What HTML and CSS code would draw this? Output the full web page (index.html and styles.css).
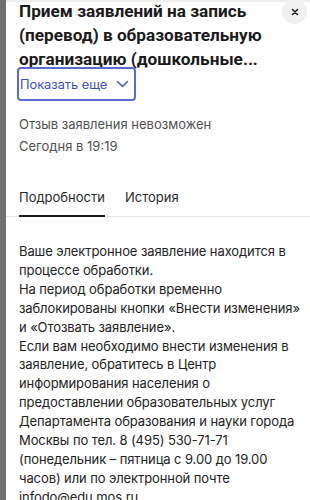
FILE: index.html
```html
<!DOCTYPE html>
<html lang="ru">
    <head>
        <meta charset="UTF-8" />
        <meta name="viewport" content="width=device-width, initial-scale=1.0" />
        <title>Заявление</title>
        <link rel="stylesheet" href="styles.css">
    </head>
    <body>
        <div class="page">
            <div class="side_strip"></div>
            <div class="panel">
                <div class="panel_head">
                    <h1>Прием заявлений на запись (перевод) в образовательную организацию (дошкольные...</h1>
                    <button class="close_btn" aria-label="Закрыть">
                        <svg width="10" height="10" viewBox="0 0 10 10">
                            <path d="M2.5 2.5 L7.5 7.5 M7.5 2.5 L2.5 7.5" stroke="#1f1f1f" stroke-width="1.6" stroke-linecap="round" />
                        </svg>
                    </button>
                </div>
                <button class="more_btn">
                    Показать еще
                    <svg width="13" height="8" viewBox="0 0 13 8">
                        <path d="M1.5 1.5 L6.5 6.5 L11.5 1.5" fill="none" stroke="#4a5bc4" stroke-width="1.5" stroke-linecap="round" stroke-linejoin="round" />
                    </svg>
                </button>
                <div class="status">
                    <p>Отзыв заявления невозможен</p>
                    <p>Сегодня в 19:19</p>
                </div>
                <div class="tabs">
                    <div class="tab active">Подробности</div>
                    <div class="tab">История</div>
                </div>
                <div class="details">
                    Ваше электронное заявление находится в процессе обработки.<br>
                    На период обработки временно заблокированы кнопки «Внести изменения» и «Отозвать заявление».<br>
                    Если вам необходимо внести изменения в заявление, обратитесь в Центр информирования населения о предоставлении образовательных услуг Департамента образования и науки города Москвы по тел. 8 (495) 530-71-71 (понедельник – пятница с 9.00 до 19.00 часов) или по электронной почте infodo@edu.mos.ru
                </div>
            </div>
        </div>
    </body>
</html>
```

FILE: styles.css
```css
body {
    margin: 0;
    font-family: "Inter", "Noto Sans", sans-serif;
    background-color: #ffffff;
    overflow: hidden;
}

.page {
    display: flex;
    min-height: 500px;
}

.side_strip {
    width: 6px;
    flex-shrink: 0;
    background-color: #707070;
}

.panel {
    flex: 1;
    background-color: #ffffff;
    border-top: 2px solid #eeeeee;
    padding: 0 0 0 13px;
    display: flex;
    flex-direction: column;
}

.panel > * {
    flex-shrink: 0;
}

.panel_head {
    display: flex;
    align-items: flex-start;
}

h1 {
    margin: -3px 0 0 0;
    font-family: "Roboto", "Noto Sans", sans-serif;
    font-size: 17.2px;
    line-height: 24px;
    font-weight: 700;
    color: #1a1a1a;
    flex: 1;
    padding-right: 6px;
}

.close_btn {
    width: 25px;
    height: 25px;
    border: none;
    border-radius: 50%;
    background-color: #f0f0f0;
    display: flex;
    align-items: center;
    justify-content: center;
    margin: -3px 3px 0 0;
    flex-shrink: 0;
    padding: 0;
}

.more_btn {
    align-self: flex-start;
    margin: -4px 0 0 -2px;
    height: 34px;
    padding: 0 5px 0 1px;
    display: flex;
    align-items: center;
    gap: 9px;
    border: 2px solid #5a6bd0;
    border-radius: 4px;
    background-color: #ffffff;
    color: #3d4fc2;
    font-family: "Inter", "Noto Sans", sans-serif;
    font-size: 12.8px;
}

.status {
    margin-top: 12px;
}

.status p {
    margin: 0;
    font-size: 13px;
    line-height: 22px;
    color: #505050;
}

.tabs {
    margin-top: 30px;
    display: flex;
    gap: 20px;
    border-bottom: 1px solid #e6e6e6;
    margin-left: -13px;
    padding-left: 13px;
}

.tab {
    font-size: 13px;
    line-height: 20px;
    color: #2a2a2a;
    padding-bottom: 8px;
}

.tab.active {
    border-bottom: 2px solid #1a1a1a;
    margin-bottom: -1px;
}

.details {
    margin-top: 25px;
    padding-right: 0;
    font-size: 13px;
    line-height: 18.9px;
    letter-spacing: -0.1px;
    color: #222222;
}
```
